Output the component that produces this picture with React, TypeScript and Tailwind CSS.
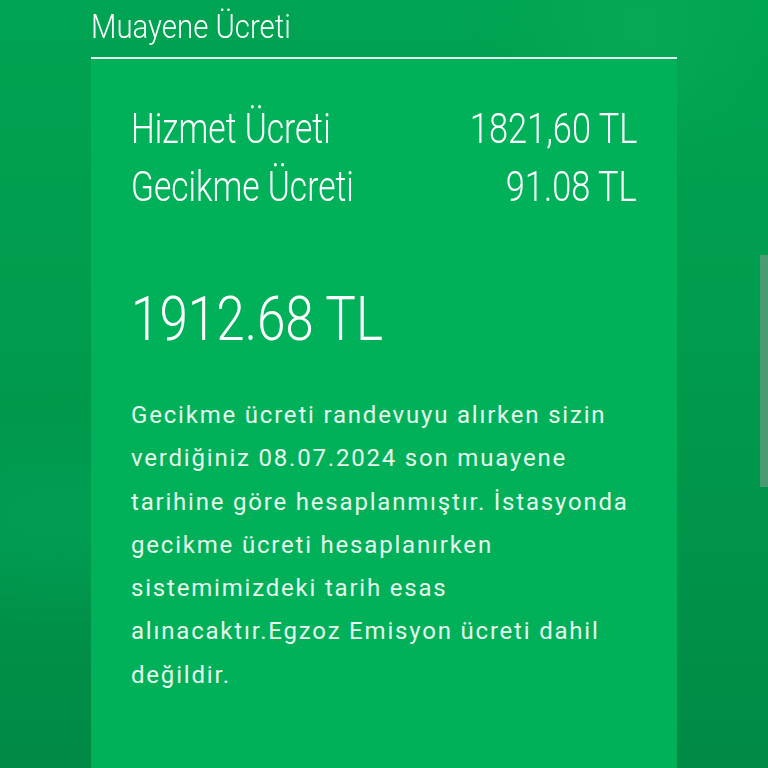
import React from 'react'

const condensed = "font-['Roboto','Liberation_Sans',sans-serif] font-light"
const body = "font-['Roboto','Liberation_Sans',sans-serif]"

const rows = [
  { label: 'Hizmet Ücreti', value: '1821,60 TL' },
  { label: 'Gecikme Ücreti', value: '91.08 TL' },
]

export default function App() {
  return (
    <div className="relative h-[768px] w-[768px] overflow-hidden bg-gradient-to-b from-[#00a452] via-[#009a4c] to-[#008a45]">
      <div className="absolute right-[40px] top-[-60px] h-[180px] w-[180px] rounded-full bg-[#10ae5c] opacity-40 blur-2xl" />
      <div className="absolute left-[-60px] top-[460px] h-[120px] w-[260px] rounded-full bg-[#00a55a] opacity-60 blur-2xl" />

      <div className="relative ml-[91px] w-[586px]">
        <div className={`${condensed} h-[57px] pt-[7px] text-[33px] leading-[40px] text-white`}>
          <span className="inline-block origin-left scale-x-[0.89]">Muayene Ücreti</span>
        </div>
        <div className="h-[2px] bg-white/90" />

        <div className="h-[709px] bg-[#00b15a] px-[40px] pt-[40px]">
          {rows.map((r) => (
            <div key={r.label} className={`${condensed} flex h-[58px] items-center justify-between text-[43px] leading-[58px] text-white`}>
              <span className="inline-block origin-left scale-x-[0.78] whitespace-nowrap">{r.label}</span>
              <span className="inline-block origin-right scale-x-[0.8] whitespace-nowrap">{r.value}</span>
            </div>
          ))}

          <div className={`${condensed} mt-[64px] text-[61px] leading-[80px] text-white`}>
            <span className="inline-block origin-left scale-x-[0.84] whitespace-nowrap">1912.68 TL</span>
          </div>

          <p className={`${body} mt-[35px] text-[24px] leading-[43.3px] tracking-[0.075em] text-[#e6f6ec]`}>
            Gecikme ücreti randevuyu alırken sizin verdiğiniz 08.07.2024 son muayene tarihine göre hesaplanmıştır.
            İstasyonda gecikme ücreti hesaplanırken sistemimizdeki tarih esas alınacaktır.Egzoz Emisyon ücreti dahil
            değildir.
          </p>
        </div>
      </div>

      <div className="absolute right-0 top-[255px] h-[232px] w-[8px] bg-[#5c9b7c]/80" />
    </div>
  )
}
